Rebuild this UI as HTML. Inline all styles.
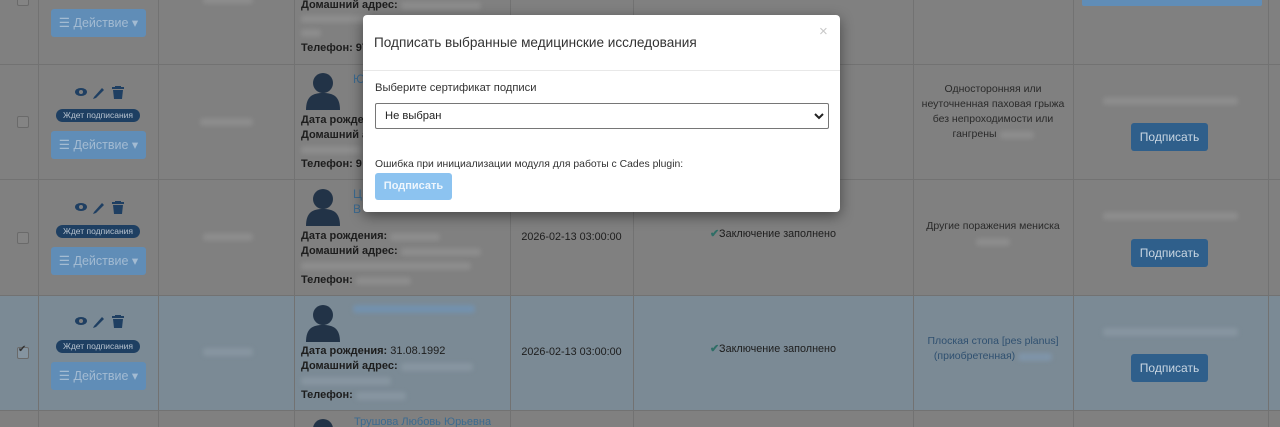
<!DOCTYPE html>
<html style="width:1280px;height:427px;overflow:hidden"><head><meta charset="utf-8"><style>
*{box-sizing:border-box;margin:0;padding:0}
body{width:1280px;height:427px;overflow:hidden;background:#808080;font-family:"Liberation Sans",Arial,sans-serif;position:relative;color:#1d1d1d}
#wrap{position:absolute;left:0;top:0;width:1280px;height:427px;overflow:hidden}
.a{position:absolute}
.vl{position:absolute;top:0;width:1px;height:427px;background:#727272}
.hl{position:absolute;left:0;width:1280px;height:1px;background:#727272}
.bl{position:absolute;background:#8c8c8c;filter:blur(2px);height:8px;border-radius:3px}
.cb{position:absolute;left:17px;width:12px;height:12px;border:1px solid #6a6a6a;background:#848484;border-radius:2px}
.badge{position:absolute;left:56px;width:84px;height:13px;border-radius:7px;background:#1e3f62;color:#b8c3cf;font-size:8.5px;line-height:13px;text-align:center}
.act{position:absolute;left:51px;width:95px;height:28px;border-radius:3px;background:#608db7;color:#a3bbd2;font-size:12.5px;line-height:28px;text-align:center}
.av{position:absolute;left:305px;width:36px;height:38px}
.lbl{position:absolute;left:301px;font-size:11px;font-weight:bold;line-height:15px;color:#1d1d1d}
.date{position:absolute;left:510px;width:123px;text-align:center;font-size:10.8px}
.zak{position:absolute;left:710px;font-size:10.8px}
.zak b{color:#2f6e66;font-weight:bold}
.diag{position:absolute;left:913px;width:160px;text-align:center;font-size:10.5px;line-height:15px;color:#2a2a2a}
.sbtn{position:absolute;left:1131px;width:77px;height:28px;border-radius:3px;background:#2f5f8b;color:#c9d6e2;font-size:12px;line-height:28px;text-align:center}
</style></head><body><div id="wrap">
<div class="a" style="left:0;top:296px;width:1280px;height:114px;background:#7b8a95"></div>
<div class="vl" style="left:38px"></div><div class="vl" style="left:158px"></div><div class="vl" style="left:294px"></div><div class="vl" style="left:510px"></div><div class="vl" style="left:633px"></div><div class="vl" style="left:913px"></div><div class="vl" style="left:1073px"></div><div class="vl" style="left:1268px"></div>
<div class="hl" style="top:64px"></div><div class="hl" style="top:179px"></div><div class="hl" style="top:295px"></div><div class="hl" style="top:410px"></div>

<div class="cb" style="top:-6px"></div>
<div class="act" style="top:9px">☰ Действие ▾</div>
<div class="bl" style="left:203px;top:-4px;width:50px"></div>
<div class="lbl" style="top:-2px">Домашний адрес: <span class="bl" style="position:relative;display:inline-block;width:80px;top:2px"></span></div>
<div class="bl" style="left:301px;top:15px;width:70px"></div>
<div class="bl" style="left:301px;top:29px;width:20px"></div>
<div class="lbl" style="top:41px">Телефон: 97</div>
<div class="a" style="left:1082px;top:-5px;width:180px;height:11px;background:#608db7;border-radius:2px"></div>

<svg width="0" height="0" style="position:absolute"><defs>
<g id="icons"><g fill="#1f3f62">
<ellipse cx="81" cy="6" rx="6" ry="4"/><circle cx="81" cy="6" r="2" fill="#808080"/>
<path d="M94 11 L102 2 L104 4 L96 12 L93 13 Z"/>
<rect x="112" y="1" width="12" height="2"/><rect x="115" y="0" width="6" height="1.5"/><path d="M113 4 H123 L122 13 H114 Z"/></g></g>
<g id="avatar" fill="#223347"><circle cx="18" cy="11" r="10"/><path d="M1 38 C1 24 8 21 18 21 C28 21 35 24 35 38 Z"/></g>
</defs></svg>

<div class="cb" style="top:116px"></div>
<svg class="a" style="left:0;top:86px" width="140" height="14"><use href="#icons"/></svg>
<div class="badge" style="top:109px">Ждет подписания</div>
<div class="act" style="top:131px">☰ Действие ▾</div>
<div class="bl" style="left:200px;top:118px;width:53px"></div>
<svg class="av" style="top:72px" viewBox="0 0 36 38"><use href="#avatar"/></svg>
<div class="a" style="left:353px;top:72px;font-size:12px;color:#3b6a90">Ю</div>
<div class="lbl" style="top:113px">Дата рождения:</div>
<div class="lbl" style="top:128px">Домашний адрес:</div>
<div class="bl" style="left:301px;top:146px;width:60px"></div>
<div class="lbl" style="top:157px">Телефон: 9</div>
<div class="diag" style="top:82px">Односторонняя или неуточненная паховая грыжа без непроходимости или гангрены <span class="bl" style="position:relative;display:inline-block;width:34px;top:2px"></span></div>
<div class="bl" style="left:1103px;top:97px;width:135px"></div>
<div class="sbtn" style="top:123px">Подписать</div>

<div class="cb" style="top:232px"></div>
<svg class="a" style="left:0;top:201px" width="140" height="14"><use href="#icons"/></svg>
<div class="badge" style="top:225px">Ждет подписания</div>
<div class="act" style="top:247px">☰ Действие ▾</div>
<div class="bl" style="left:203px;top:233px;width:50px"></div>
<svg class="av" style="top:188px" viewBox="0 0 36 38"><use href="#avatar"/></svg>
<div class="a" style="left:353px;top:187px;font-size:12px;color:#3b6a90;line-height:15px">Ц<br>В</div>
<div class="lbl" style="top:229px">Дата рождения: <span class="bl" style="position:relative;display:inline-block;width:50px;top:2px"></span></div>
<div class="lbl" style="top:244px">Домашний адрес: <span class="bl" style="position:relative;display:inline-block;width:80px;top:2px"></span></div>
<div class="bl" style="left:301px;top:262px;width:170px"></div>
<div class="lbl" style="top:273px">Телефон: <span class="bl" style="position:relative;display:inline-block;width:55px;top:2px"></span></div>
<div class="date" style="top:231px">2026-02-13 03:00:00</div>
<div class="zak" style="top:227px"><b>✔</b>Заключение заполнено</div>
<div class="diag" style="top:219px">Другие поражения мениска<br><span class="bl" style="position:relative;display:inline-block;width:34px;top:2px"></span></div>
<div class="bl" style="left:1103px;top:212px;width:135px"></div>
<div class="sbtn" style="top:239px">Подписать</div>

<div class="cb" style="top:347px;background:#8594a0"></div><div class="a" style="left:18px;top:344px;font-size:10px;line-height:12px;color:#333">✔</div>
<svg class="a" style="left:0;top:315px" width="140" height="14"><use href="#icons"/></svg>
<div class="badge" style="top:340px">Ждет подписания</div>
<div class="act" style="top:362px">☰ Действие ▾</div>
<div class="bl" style="left:203px;top:348px;width:50px;background:#8795a0"></div>
<svg class="av" style="top:304px" viewBox="0 0 36 38"><use href="#avatar"/></svg>
<div class="bl" style="left:353px;top:305px;width:122px;background:#7391ad"></div>
<div class="lbl" style="top:344px">Дата рождения: <span style="font-weight:normal">31.08.1992</span></div>
<div class="lbl" style="top:359px">Домашний адрес: <span class="bl" style="position:relative;display:inline-block;width:72px;top:2px;background:#8795a0"></span></div>
<div class="bl" style="left:301px;top:377px;width:90px;background:#8795a0"></div>
<div class="lbl" style="top:388px">Телефон: <span class="bl" style="position:relative;display:inline-block;width:50px;top:2px;background:#8795a0"></span></div>
<div class="date" style="top:346px">2026-02-13 03:00:00</div>
<div class="zak" style="top:342px"><b>✔</b>Заключение заполнено</div>
<div class="diag" style="top:334px;color:#2f5070">Плоская стопа [pes planus] (приобретенная) <span class="bl" style="position:relative;display:inline-block;width:34px;top:2px;background:#7f94a8"></span></div>
<div class="bl" style="left:1103px;top:328px;width:135px;background:#8795a0"></div>
<div class="sbtn" style="top:354px">Подписать</div>

<div class="a" style="left:305px;top:418px;width:36px;height:9px;overflow:hidden"><svg width="36" height="38" viewBox="0 0 36 38"><use href="#avatar"/></svg></div>
<div class="a" style="left:354px;top:416px;height:11px;overflow:hidden;font-size:11px;line-height:12px;color:#3b6a90">Трушова Любовь Юрьевна</div>

<div class="a" style="left:363px;top:15px;width:477px;height:197px;background:#fff;border-radius:4px;box-shadow:0 4px 14px rgba(0,0,0,.45)">
<div class="a" style="left:11px;top:20px;font-size:13.6px;color:#333">Подписать выбранные медицинские исследования</div>
<div class="a" style="left:456px;top:8px;font-size:15px;color:#c8c8c8">×</div>
<div class="a" style="left:0;top:55px;width:477px;height:1px;background:#e8e8e8"></div>
<div class="a" style="left:12px;top:67px;font-size:11.2px;color:#333">Выберите сертификат подписи</div>
<div class="a" style="left:12px;top:88px;width:454px;height:26px;border:1px solid #767676;border-radius:2px;font-size:11.2px;line-height:24px;padding-left:9px;color:#222">Не выбран
<svg class="a" style="right:4px;top:8px" width="10" height="8"><path d="M1 2 L5 6 L9 2" stroke="#222" stroke-width="2" fill="none"/></svg></div>
<div class="a" style="left:12px;top:144px;font-size:10.4px;color:#333">Ошибка при инициализации модуля для работы с Cades plugin:</div>
<div class="a" style="left:12px;top:158px;width:77px;height:27px;border-radius:3px;background:#8cc3f0;color:#eef6fd;font-size:11px;font-weight:bold;line-height:27px;text-align:center">Подписать</div>
</div>
</div></body></html>
